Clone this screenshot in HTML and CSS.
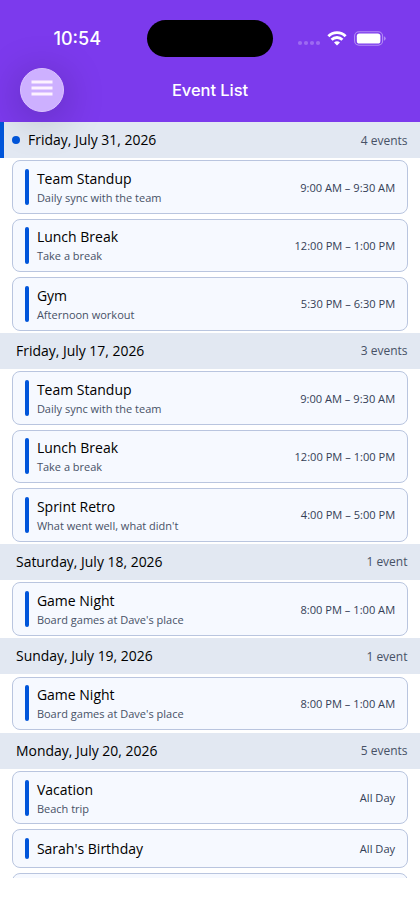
FILE: index.html
```
<!DOCTYPE html>
<html lang="en">
<head>
<meta charset="utf-8">
<title>Event List</title>
<link rel="stylesheet" href="styles.css">
</head>
<body>
<div class="screen">
  <header class="top">
    <div class="status">
      <span class="clock">10:54</span>
      <span class="island"></span>
      <span class="signals">
        <svg class="dots" width="24" height="6" viewBox="0 0 24 6"><g fill="#fff" fill-opacity=".25"><circle cx="3" cy="3" r="2.1"/><circle cx="9" cy="3" r="2.1"/><circle cx="15" cy="3" r="2.1"/><circle cx="21" cy="3" r="2.1"/></g></svg>
        <svg class="wifi" width="20" height="15" viewBox="0 0 20 15"><g fill="none" stroke="#fff" stroke-width="2.9"><path d="M1.4 5.2a12.2 12.2 0 0 1 17.2 0"/><path d="M4.6 8.7a7.7 7.7 0 0 1 10.8 0"/></g><path d="M10 14.6 7 11.6a4.3 4.3 0 0 1 6 0z" fill="#fff"/></svg>
        <svg class="battery" width="32" height="15" viewBox="0 0 32 15"><rect x=".6" y=".8" width="28" height="13.4" rx="4.4" fill="none" stroke="#fff" stroke-opacity=".42" stroke-width="1.1"/><rect x="2.8" y="2.6" width="23.6" height="9.9" rx="2.6" fill="#fff"/><path d="M30.2 5.2q1.4.8 1.4 2.3t-1.4 2.3z" fill="#fff" fill-opacity=".5"/></svg>
      </span>
    </div>
    <nav class="bar">
      <button class="menu" aria-label="Menu"><svg width="22" height="16" viewBox="0 0 22 16"><path d="M.5 2h21M.5 8h21M.5 14h21" stroke="#fdf2ff" stroke-width="3"/></svg></button>
      <h1>Event List</h1>
    </nav>
  </header>
  <main class="list">
    <section>
      <div class="day today"><i class="dot"></i><h2>Friday, July 31, 2026</h2><span class="count">4 events</span></div>
      <article class="card"><i class="tag"></i><div class="info"><h3>Team Standup</h3><p>Daily sync with the team</p></div><time>9:00 AM – 9:30 AM</time></article>
      <article class="card"><i class="tag"></i><div class="info"><h3>Lunch Break</h3><p>Take a break</p></div><time>12:00 PM – 1:00 PM</time></article>
      <article class="card"><i class="tag"></i><div class="info"><h3>Gym</h3><p>Afternoon workout</p></div><time>5:30 PM – 6:30 PM</time></article>
    </section>
    <section>
      <div class="day"><h2>Friday, July 17, 2026</h2><span class="count">3 events</span></div>
      <article class="card"><i class="tag"></i><div class="info"><h3>Team Standup</h3><p>Daily sync with the team</p></div><time>9:00 AM – 9:30 AM</time></article>
      <article class="card"><i class="tag"></i><div class="info"><h3>Lunch Break</h3><p>Take a break</p></div><time>12:00 PM – 1:00 PM</time></article>
      <article class="card"><i class="tag"></i><div class="info"><h3>Sprint Retro</h3><p>What went well, what didn't</p></div><time>4:00 PM – 5:00 PM</time></article>
    </section>
    <section>
      <div class="day"><h2>Saturday, July 18, 2026</h2><span class="count">1 event</span></div>
      <article class="card"><i class="tag"></i><div class="info"><h3>Game Night</h3><p>Board games at Dave's place</p></div><time>8:00 PM – 1:00 AM</time></article>
    </section>
    <section>
      <div class="day"><h2>Sunday, July 19, 2026</h2><span class="count">1 event</span></div>
      <article class="card"><i class="tag"></i><div class="info"><h3>Game Night</h3><p>Board games at Dave's place</p></div><time>8:00 PM – 1:00 AM</time></article>
    </section>
    <section>
      <div class="day"><h2>Monday, July 20, 2026</h2><span class="count">5 events</span></div>
      <article class="card"><i class="tag"></i><div class="info"><h3>Vacation</h3><p>Beach trip</p></div><time>All Day</time></article>
      <article class="card short"><i class="tag"></i><div class="info"><h3>Sarah's Birthday</h3></div><time>All Day</time></article>
      <article class="card"></article>
    </section>
  </main>
</div>
</body>
</html>
```

FILE: styles.css
```
* { box-sizing: border-box; }
body { margin: 0; background: #fff; }
h1, h2, h3, p { margin: 0; font-weight: 400; }

.screen {
  width: 420px;
  height: 912px;
  display: flex;
  flex-direction: column;
  overflow: hidden;
  font-family: "Open Sans", "Noto Sans", sans-serif;
  color: #000;
}

.top {
  position: relative;
  z-index: 1;
  height: 122px;
  flex: none;
  background: #7c3aed;
  color: #fff;
  font-family: Inter, sans-serif;
}
.status {
  display: grid;
  grid-template-columns: 147px 126px 147px;
  height: 68px;
  padding-top: 20px;
}
.clock {
  padding-left: 53.5px;
  font-size: 18px;
  line-height: 37px;
  font-weight: 550;
}
.island { height: 37px; border-radius: 19px; background: #000; }
.signals { display: flex; align-items: center; height: 36px; padding-left: 24px; }
.dots { margin-top: 10px; }
.wifi { margin-left: 6px; }
.battery { margin-left: 7px; }

.bar {
  display: grid;
  grid-template-columns: 64px 1fr 64px;
  align-items: center;
  height: 44px;
}
.bar h1 { text-align: center; font-size: 16.5px; line-height: 22px; font-weight: 550; letter-spacing: -.05px; }
.menu {
  display: flex;
  align-items: center;
  justify-content: center;
  width: 44px;
  height: 44px;
  margin: 0 0 0 20px;
  padding: 0 0 4px;
  border: 1px solid #dcc4ff;
  border-radius: 50%;
  background: #cdb0ff;
  box-shadow: 0 6px 40px 2px rgba(0, 0, 0, .22);
}

.list { flex: none; height: 756px; overflow: hidden; }
.day {
  display: flex;
  align-items: center;
  height: 36px;
  padding: 0 12.5px 0 16px;
  margin-bottom: 2.4px;
  background: #e2e8f2;
}
.today { padding-left: 8px; border-left: 4px solid #0055da; }
.dot { width: 8px; height: 8px; margin-right: 8px; border-radius: 50%; background: #0055da; }
.day h2 { flex: 1; font-size: 13.95px; line-height: 20px; }
.count { font-size: 12px; color: #475166; }

.card {
  display: flex;
  align-items: center;
  height: 53.5px;
  margin: 0 12.4px 4.84px;
  padding: 0 11.5px;
  border: 1px solid #b9c5df;
  border-radius: 8px;
  background: #f6f9ff;
}
section .card:last-child { margin-bottom: 2.42px; }
.short { height: 38.6px; }
.tag { align-self: stretch; width: 4px; margin: 7.7px 8px 7.7px 0; border-radius: 2px; background: #0055da; }
.info { flex: 1; }
.card h3 { font-size: 14px; line-height: 20px; }
.card p { font-size: 11px; line-height: 15px; margin-top: 1px; color: #475166; }
.card time { font-size: 11.1px; color: #344056; }
```
